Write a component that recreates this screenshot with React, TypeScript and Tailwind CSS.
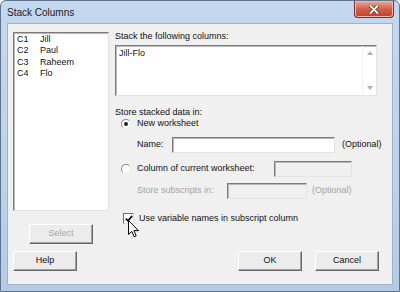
const ui = { fontFamily: '"Liberation Sans", Arial, sans-serif' };

const sunken =
  "border border-t-[#7b7b7b] border-l-[#7b7b7b] border-b-[#e3e3e3] border-r-[#e3e3e3] shadow-[inset_1px_1px_0_#b9b9b9] shrink-0";

const raised =
  "border border-t-[#ffffff] border-l-[#ffffff] border-b-[#696969] border-r-[#696969] shadow-[inset_-1px_-1px_0_#a0a0a0] bg-[#ececec]";

function Radio({ checked }: { checked?: boolean }) {
  return (
    <div className="w-[10px] h-[10px] rounded-full border border-t-[#8a8a8a] border-l-[#8a8a8a] border-b-[#e8e8e8] border-r-[#e8e8e8] bg-white flex items-center justify-center shrink-0">
      {checked && <div className="w-[4px] h-[4px] rounded-full bg-[#222]" />}
    </div>
  );
}

function Button({ label, disabled, width }: { label: string; disabled?: boolean; width: string }) {
  return (
    <div className={`${raised} ${width} h-[20px] flex items-center justify-center text-[9px] ${disabled ? "text-[#a8a8a8]" : "text-[#111]"}`}>
      {label}
    </div>
  );
}

function Cursor() {
  return (
    <svg className="absolute left-[127px] top-[219px]" width="12" height="18" viewBox="0 0 12 18">
      <path d="M0.5 0.5 L0.5 14.5 L3.8 11.4 L6.2 16.8 L8.2 15.9 L5.9 10.6 L10.4 10.6 Z" fill="#fff" stroke="#000" strokeWidth="1" strokeLinejoin="round" />
    </svg>
  );
}

const columns = [
  ["C1", "Jill"],
  ["C2", "Paul"],
  ["C3", "Raheem"],
  ["C4", "Flo"],
];

export default function App() {
  return (
    <div className="relative w-[400px] h-[292px] flex flex-col bg-gradient-to-b from-[#c3d7ee] via-[#bed4ec] to-[#b3cbe6] border border-[#5f7389] rounded-t-[6px] overflow-hidden" style={ui}>
      {/* title bar */}
      <div className="h-[22px] flex items-start justify-between">
        <div className="pl-[6px] pt-[6px] text-[10px] leading-[12px] text-[#1a1a1a]">Stack Columns</div>
        <div className="mr-[5px] w-[40px] h-[17px] rounded-b-[4px] border border-t-0 border-[#7a2f22] bg-gradient-to-b from-[#e9a999] via-[#d0604a] to-[#c23d26] flex items-center justify-center shadow-[inset_0_0_0_1px_#f0b9ab]">
          <svg width="10" height="9" viewBox="0 0 10 9">
            <path d="M1.5 1 L8.5 8 M8.5 1 L1.5 8" stroke="#4a1a12" strokeWidth="3.2" strokeLinecap="round" />
            <path d="M1.5 1 L8.5 8 M8.5 1 L1.5 8" stroke="#fff" strokeWidth="2" strokeLinecap="round" />
          </svg>
        </div>
      </div>

      {/* client area */}
      <div className="mx-[6px] mb-[6px] flex-1 flex flex-col bg-[#f0f0f0] border border-[#9fb2c8] text-[9px] text-[#111] whitespace-nowrap">
        <div className="flex pt-[6px] pl-[5px] gap-[6px]">
          {/* left column */}
          <div className="flex flex-col">
            <div className={`${sunken} mt-[2px] w-[96px] h-[179px] bg-white pt-[1px] pl-[3px] leading-[11.3px]`}>
              {columns.map(([c, n]) => (
                <div key={c} className="flex">
                  <span className="w-[23px]">{c}</span>
                  <span>{n}</span>
                </div>
              ))}
            </div>
            <div className="mt-[13px] ml-[16px]">
              <Button label="Select" disabled width="w-[64px]" />
            </div>
          </div>

          {/* right column */}
          <div className="flex flex-col w-[262px]">
            <div className="leading-[12px]">Stack the following columns:</div>
            <div className={`${sunken} mt-[3px] h-[51px] bg-white flex justify-between`}>
              <div className="pl-[3px] pt-[1px] leading-[12px]">Jill-Flo</div>
              <div className="w-[14px] flex flex-col items-center justify-between py-[5px] border-l border-[#f0f0f0]">
                <svg width="6" height="4" viewBox="0 0 6 4"><path d="M0 4 L3 0 L6 4 Z" fill="#b0b0b0" /></svg>
                <svg width="6" height="4" viewBox="0 0 6 4"><path d="M0 0 L3 4 L6 0 Z" fill="#b0b0b0" /></svg>
              </div>
            </div>

            <div className="mt-[10px] leading-[12px]">Store stacked data in:</div>
            <div className="flex items-center h-[12px] ml-[6px] gap-[6px]">
              <Radio checked />
              <span>New worksheet</span>
            </div>
            <div className="flex items-center mt-[7px] ml-[22px]">
              <span className="w-[35px] shrink-0">Name:</span>
              <div className={`${sunken} w-[163px] h-[16px] bg-white`} />
              <span className="ml-[7px]">(Optional)</span>
            </div>

            <div className="flex items-center mt-[8px] ml-[6px]">
              <Radio />
              <span className="ml-[6px] w-[137px] shrink-0">Column of current worksheet:</span>
              <div className={`${sunken} w-[78px] h-[16px] bg-[#f0f0f0]`} />
            </div>
            <div className="flex items-center mt-[6px] ml-[22px] text-[#a3a3a3]">
              <span className="w-[90px] shrink-0">Store subscripts in:</span>
              <div className={`${sunken} w-[80px] h-[16px] bg-[#f0f0f0]`} />
              <span className="ml-[5px]">(Optional)</span>
            </div>

            <div className="flex items-center mt-[13px] ml-[8px] gap-[5px]">
              <div className="w-[11px] h-[11px] shrink-0 border border-t-[#6d6d6d] border-l-[#6d6d6d] border-b-[#dedede] border-r-[#dedede] bg-white flex items-center justify-center">
                <svg width="8" height="7" viewBox="0 0 8 7"><path d="M0.8 3.5 L3 5.8 L7.2 0.9" fill="none" stroke="#111" strokeWidth="1.8" /></svg>
              </div>
              <span className="leading-[12px]">Use variable names in subscript column</span>
            </div>
          </div>
        </div>

        <div className="flex justify-between mt-[7px] pl-[5px] pr-[13px]">
          <Button label="Help" width="w-[64px]" />
          <div className="flex gap-[13px]">
            <Button label="OK" width="w-[64px]" />
            <Button label="Cancel" width="w-[64px]" />
          </div>
        </div>
      </div>

      <Cursor />
    </div>
  );
}
